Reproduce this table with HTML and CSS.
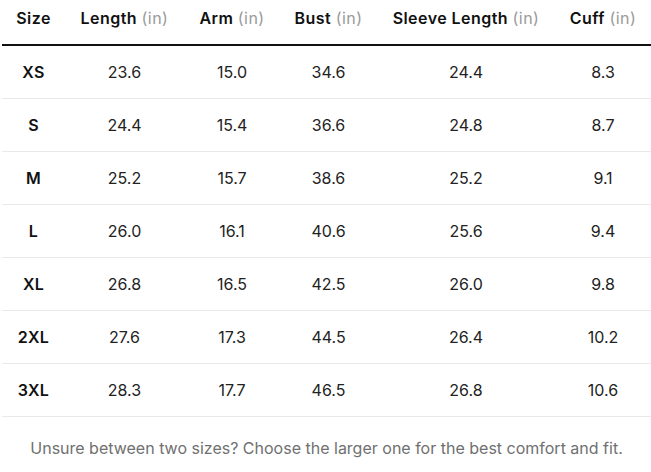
FILE: index.html
```html
<!DOCTYPE html>
<html lang="en">
<head>
<meta charset="utf-8">
<title>Size Chart</title>
<link rel="stylesheet" href="styles.css">
</head>
<body>
<div class="chart">
  <table class="size-table">
    <colgroup>
      <col class="c-size">
      <col class="c-length">
      <col class="c-arm">
      <col class="c-bust">
      <col class="c-sleeve">
      <col class="c-cuff">
    </colgroup>
    <thead>
      <tr>
        <th>Size</th>
        <th>Length <span class="unit">(in)</span></th>
        <th>Arm <span class="unit">(in)</span></th>
        <th>Bust <span class="unit">(in)</span></th>
        <th>Sleeve Length <span class="unit">(in)</span></th>
        <th>Cuff <span class="unit">(in)</span></th>
      </tr>
    </thead>
    <tbody>
      <tr><td class="size">XS</td><td>23.6</td><td>15.0</td><td>34.6</td><td>24.4</td><td>8.3</td></tr>
      <tr><td class="size">S</td><td>24.4</td><td>15.4</td><td>36.6</td><td>24.8</td><td>8.7</td></tr>
      <tr><td class="size">M</td><td>25.2</td><td>15.7</td><td>38.6</td><td>25.2</td><td>9.1</td></tr>
      <tr><td class="size">L</td><td>26.0</td><td>16.1</td><td>40.6</td><td>25.6</td><td>9.4</td></tr>
      <tr><td class="size">XL</td><td>26.8</td><td>16.5</td><td>42.5</td><td>26.0</td><td>9.8</td></tr>
      <tr><td class="size">2XL</td><td>27.6</td><td>17.3</td><td>44.5</td><td>26.4</td><td>10.2</td></tr>
      <tr><td class="size">3XL</td><td>28.3</td><td>17.7</td><td>46.5</td><td>26.8</td><td>10.6</td></tr>
    </tbody>
  </table>
  <p class="note">Unsure between two sizes? Choose the larger one for the best comfort and fit.</p>
</div>
</body>
</html>
```
FILE: styles.css
```css
* { box-sizing: border-box; }
html, body { margin: 0; padding: 0; background: #ffffff; }
body {
  font-family: "Inter", "Noto Sans", sans-serif;
  color: #1a1a1a;
}
.chart {
  padding-left: 2px;
}
.size-table {
  width: 649px;
  border-collapse: collapse;
  table-layout: fixed;
}
.c-size { width: 63px; }
.c-length { width: 119px; }
.c-arm { width: 96px; }
.c-bust { width: 97px; }
.c-sleeve { width: 178px; }
.c-cuff { width: 96px; }

.size-table th {
  font-size: 16px;
  font-weight: 600;
  line-height: 20px;
  letter-spacing: 0.45px;
  color: #111111;
  text-align: center;
  vertical-align: top;
  padding: 8px 0 16px;
  white-space: nowrap;
  border-bottom: 2px solid #111111;
}
.unit {
  font-weight: 400;
  color: #9a9a9a;
}
.size-table td {
  height: 53px;
  font-size: 16px;
  line-height: 20px;
  text-align: center;
  vertical-align: middle;
  padding: 0;
  color: #222222;
  border-bottom: 1px solid #e9e9e9;
}
.size-table td.size {
  font-weight: 600;
  letter-spacing: 0.3px;
  color: #111111;
}
.note {
  margin: 21px 0 0;
  text-align: center;
  font-size: 16px;
  line-height: 20px;
  color: #707070;
}
```
